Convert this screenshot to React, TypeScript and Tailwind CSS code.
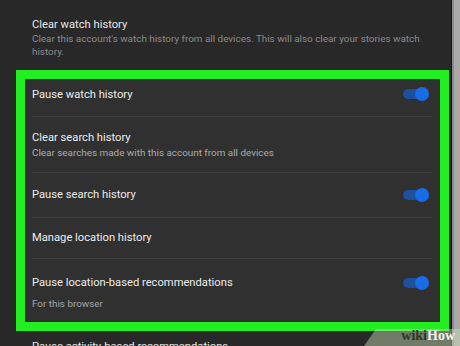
import React from "react"

const font = { fontFamily: "Roboto, 'Noto Sans', Arial, sans-serif" }

function Toggle() {
  return (
    <div className="relative w-[26px] h-[14px] flex items-center shrink-0">
      <div className="w-[24px] h-[10px] rounded-full bg-[#1d4f9e]" />
      <div className="absolute right-0 top-0 w-[14px] h-[14px] rounded-full bg-[#1a6be6]" />
    </div>
  )
}

function Divider() {
  return <div className="h-px shrink-0 bg-[#3f3f3f]" />
}

export default function App() {
  return (
    <div
      className="relative w-[460px] h-[346px] overflow-hidden bg-[#282828] flex"
      style={font}
    >
      <div className="flex-1 flex flex-col">
        {/* top entry */}
        <div className="h-[70px] shrink-0 pl-[32px] pr-[26px] pt-[17px]">
          <div className="text-[11.2px] leading-[16px] text-[#e6e6e6]">Clear watch history</div>
          <div className="text-[9.9px] leading-[12.5px] text-[#8a8a8a]">
            Clear this account's watch history from all devices. This will also clear your stories watch history.
          </div>
        </div>

        {/* highlighted block */}
        <div className="shrink-0 ml-[16px] mr-[2px] border-[9px] border-[#22ee22] bg-[#303030] pl-[7px] pr-[8px]">
          <div className="h-[37px] pt-[8px] flex items-start justify-between">
            <div className="text-[11.2px] leading-[16px] text-[#ececec]">Pause watch history</div>
            <div className="mr-[3px]">
              <Toggle />
            </div>
          </div>
          <Divider />
          <div className="h-[55px] pt-[13px]">
            <div className="text-[11.2px] leading-[16px] text-[#ececec]">Clear search history</div>
            <div className="text-[9.9px] leading-[14px] text-[#ababab]">
              Clear searches made with this account from all devices
            </div>
          </div>
          <Divider />
          <div className="h-[44px] pt-[14px] flex items-start justify-between">
            <div className="text-[11.2px] leading-[16px] text-[#ececec]">Pause search history</div>
            <div className="mr-[3px] mt-px">
              <Toggle />
            </div>
          </div>
          <Divider />
          <div className="h-[40px] pt-[12px]">
            <div className="text-[11.2px] leading-[16px] text-[#ececec]">Manage location history</div>
          </div>
          <Divider />
          <div className="h-[63px] pt-[16px] flex items-start justify-between">
            <div>
              <div className="text-[11.2px] leading-[16px] text-[#ececec]">
                Pause location-based recommendations
              </div>
              <div className="mt-[6px] text-[9.9px] leading-[14px] text-[#a5a5a5]">For this browser</div>
            </div>
            <div className="mr-[3px] mt-px">
              <Toggle />
            </div>
          </div>
        </div>

        <div className="shrink-0 pl-[32px] pt-[8px] text-[11.2px] leading-[16px] text-[#e6e6e6]">
          Pause activity-based recommendations
        </div>
      </div>

      {/* scrollbar edge */}
      <div className="w-px bg-[#141414]" />
      <div className="w-[8px] bg-[#a8a8a8] border-l-2 border-[#8c8c8c]" />

      {/* watermark */}
      <div className="absolute right-0 bottom-0 w-[96px] h-[17px] bg-[rgba(205,225,180,0.45)] [clip-path:polygon(12px_0,100%_0,100%_100%,0_100%)]" />
      <div
        className="absolute right-[5px] bottom-[2px] text-[14px] leading-[16px] font-bold"
        style={{ fontFamily: "'Liberation Serif', 'DejaVu Serif', serif" }}
      >
        <span className="text-[#2c3a1f]">wiki</span>
        <span className="text-[#f2f2f2]">How</span>
      </div>
    </div>
  )
}
